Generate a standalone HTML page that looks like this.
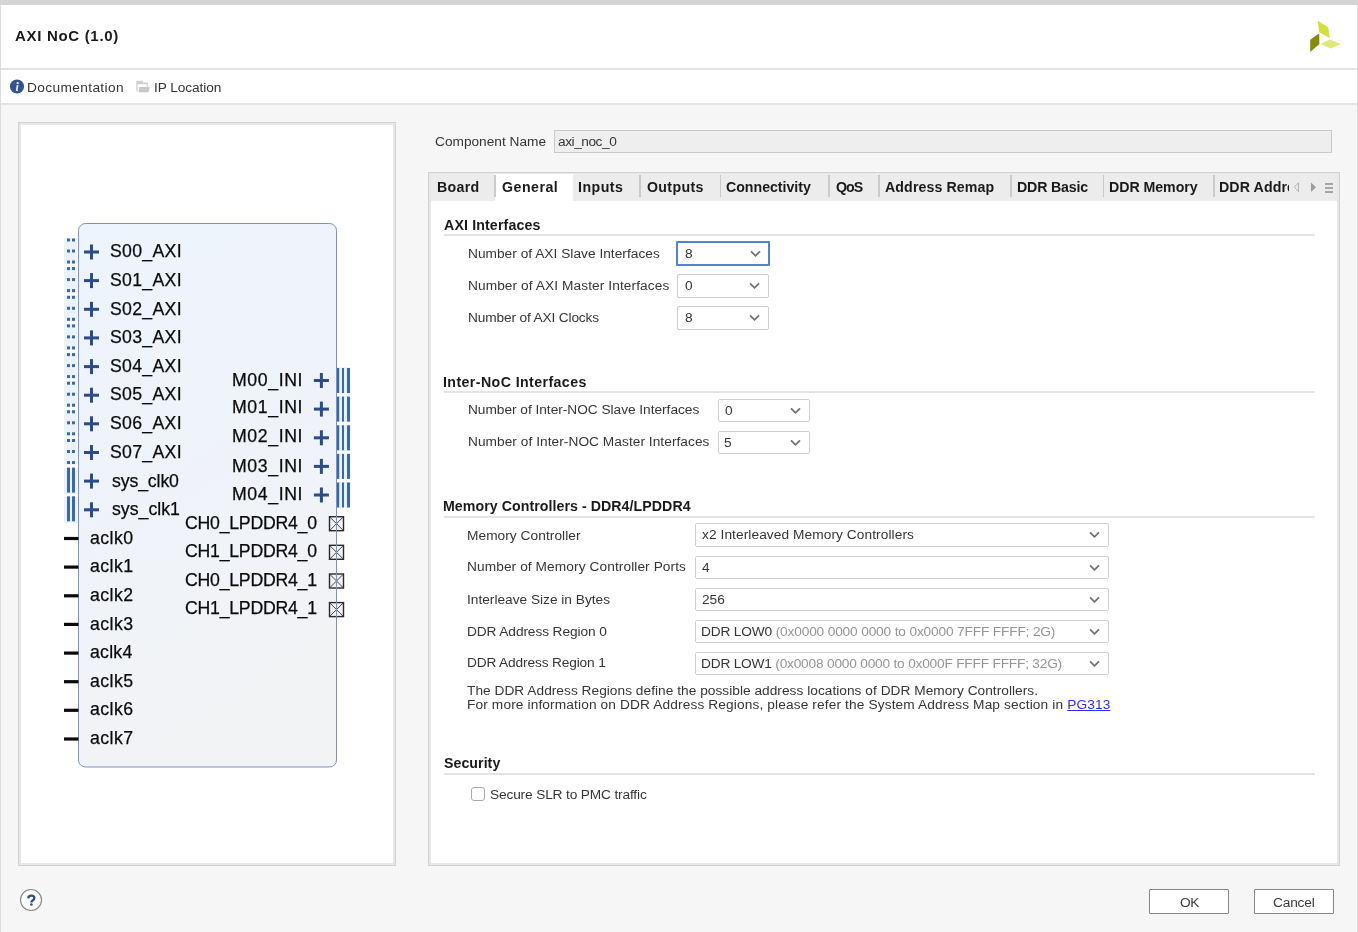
<!DOCTYPE html>
<html><head><meta charset="utf-8">
<style>
*{margin:0;padding:0;box-sizing:border-box}
html,body{width:1358px;height:932px;overflow:hidden;background:#f6f6f6;font-family:"Liberation Sans",sans-serif}
.a{position:absolute}
.t{position:absolute;white-space:nowrap;will-change:transform}
.clip{position:absolute;overflow:hidden}
.panel{position:absolute;background:#fff;border:1px solid #d2d2d2;box-shadow:inset 0 0 0 2px #e7e7e7}
.sect{position:absolute;height:2px;background:#e4e4e4;left:444px;width:871px}
.combo{position:absolute;background:#fff;border:1px solid #cfcfcf;border-radius:2px}
.tsep{position:absolute;top:175px;width:1.6px;height:22px;background:#cbcbcb}
.btn{position:absolute;top:889px;width:80px;height:25px;background:#fff;border:1px solid #858585;border-radius:1px}
</style></head><body>
<div class="ui">
<div class="a" style="left:0;top:0;width:1358px;height:5px;background:#d4d4d4"></div>
<div class="a" style="left:0;top:5px;width:1358px;height:63px;background:#fff"></div>
<div class="a" style="left:0;top:68px;width:1358px;height:2px;background:#e3e3e3"></div>
<div class="a" style="left:0;top:70px;width:1358px;height:33px;background:#fff"></div>
<div class="a" style="left:0;top:103px;width:1358px;height:2px;background:#e3e3e3"></div>
<div class="a" style="left:0;top:5px;width:1px;height:927px;background:#dcdcdc"></div>
<div class="a" style="left:1357px;top:5px;width:1px;height:927px;background:#dcdcdc"></div>
<svg class="a" style="left:1300px;top:15px" width="50" height="45" viewBox="1300 15 50 45">
<polygon points="1317.7,20.7 1328.2,27.2 1329.8,38.1 1319.2,32.3" fill="#d4e03a"/>
<polygon points="1319.2,33.2 1319.4,43.9 1310.2,52 1310.2,39.8" fill="#878a0c"/>
<polygon points="1320.3,44.1 1329.8,39.4 1340.9,43.9 1331,48.6" fill="#e0e87a"/>
</svg>
<svg class="a" style="left:9px;top:79px" width="16" height="16" viewBox="0 0 16 16">
<circle cx="8" cy="7.5" r="7.1" fill="#34548e"/>
<circle cx="8.7" cy="4.2" r="1.15" fill="#f4f6fa"/>
<path d="M7.7 6.2 L9.5 6.2 L8.5 10.6 Q8.4 11.1 9.1 10.9 L8.9 11.9 Q6.6 12.4 6.9 10.9 L7.6 7.3 L7.1 7.3 Z" fill="#f4f6fa"/>
</svg>
<svg class="a" style="left:130px;top:76px" width="30" height="22" viewBox="130 76 30 22">
<path d="M136.3 80.7 H142.5 L143.5 82.6 H147.8 V87.5 H137.6 V91.5 H136.3 Z" fill="#cfcfcf"/>
<path d="M137.6 84.2 H146.6 V87.2 H137.6 Z" fill="#fdfdfd"/>
<path d="M139.4 87.1 H149.8 L148.6 92.3 H138.4 Z" fill="#c9c9c9"/>
</svg>
<div class="panel" style="left:18px;top:122px;width:378px;height:744px"></div>
<svg class="a" style="left:18px;top:122px" width="378" height="744" viewBox="18 122 378 744">
<defs><linearGradient id="bg" x1="0" y1="0" x2="0.3" y2="1"><stop offset="0" stop-color="#edf4fd"/><stop offset="0.55" stop-color="#eff3f9"/><stop offset="1" stop-color="#f2f3f5"/></linearGradient></defs>
<rect x="78.5" y="223.5" width="258" height="543.5" rx="7" ry="7" fill="url(#bg)" stroke="#7b92c4" stroke-width="1"/>
<rect x="64" y="238.0" width="13" height="26" fill="#eaf2fc"/>
<rect x="67" y="238.5" width="3" height="3" fill="#3b6aa3"/><rect x="72" y="238.5" width="3" height="3" fill="#3b6aa3"/>
<rect x="67" y="249.5" width="3" height="3" fill="#3b6aa3"/><rect x="72" y="249.5" width="3" height="3" fill="#3b6aa3"/>
<rect x="67" y="260.5" width="3" height="3" fill="#3b6aa3"/><rect x="72" y="260.5" width="3" height="3" fill="#3b6aa3"/>
<rect x="84.0" y="250.5" width="15" height="3" fill="#2d4b86"/><rect x="90.0" y="244.5" width="3" height="15" fill="#2d4b86"/>
<rect x="64" y="266.6" width="13" height="26" fill="#eaf2fc"/>
<rect x="67" y="267.1" width="3" height="3" fill="#3b6aa3"/><rect x="72" y="267.1" width="3" height="3" fill="#3b6aa3"/>
<rect x="67" y="278.1" width="3" height="3" fill="#3b6aa3"/><rect x="72" y="278.1" width="3" height="3" fill="#3b6aa3"/>
<rect x="67" y="289.1" width="3" height="3" fill="#3b6aa3"/><rect x="72" y="289.1" width="3" height="3" fill="#3b6aa3"/>
<rect x="84.0" y="279.1" width="15" height="3" fill="#2d4b86"/><rect x="90.0" y="273.1" width="3" height="15" fill="#2d4b86"/>
<rect x="64" y="295.3" width="13" height="26" fill="#eaf2fc"/>
<rect x="67" y="295.8" width="3" height="3" fill="#3b6aa3"/><rect x="72" y="295.8" width="3" height="3" fill="#3b6aa3"/>
<rect x="67" y="306.8" width="3" height="3" fill="#3b6aa3"/><rect x="72" y="306.8" width="3" height="3" fill="#3b6aa3"/>
<rect x="67" y="317.8" width="3" height="3" fill="#3b6aa3"/><rect x="72" y="317.8" width="3" height="3" fill="#3b6aa3"/>
<rect x="84.0" y="307.8" width="15" height="3" fill="#2d4b86"/><rect x="90.0" y="301.8" width="3" height="15" fill="#2d4b86"/>
<rect x="64" y="323.9" width="13" height="26" fill="#eaf2fc"/>
<rect x="67" y="324.4" width="3" height="3" fill="#3b6aa3"/><rect x="72" y="324.4" width="3" height="3" fill="#3b6aa3"/>
<rect x="67" y="335.4" width="3" height="3" fill="#3b6aa3"/><rect x="72" y="335.4" width="3" height="3" fill="#3b6aa3"/>
<rect x="67" y="346.4" width="3" height="3" fill="#3b6aa3"/><rect x="72" y="346.4" width="3" height="3" fill="#3b6aa3"/>
<rect x="84.0" y="336.4" width="15" height="3" fill="#2d4b86"/><rect x="90.0" y="330.4" width="3" height="15" fill="#2d4b86"/>
<rect x="64" y="352.6" width="13" height="26" fill="#eaf2fc"/>
<rect x="67" y="353.1" width="3" height="3" fill="#3b6aa3"/><rect x="72" y="353.1" width="3" height="3" fill="#3b6aa3"/>
<rect x="67" y="364.1" width="3" height="3" fill="#3b6aa3"/><rect x="72" y="364.1" width="3" height="3" fill="#3b6aa3"/>
<rect x="67" y="375.1" width="3" height="3" fill="#3b6aa3"/><rect x="72" y="375.1" width="3" height="3" fill="#3b6aa3"/>
<rect x="84.0" y="365.1" width="15" height="3" fill="#2d4b86"/><rect x="90.0" y="359.1" width="3" height="15" fill="#2d4b86"/>
<rect x="64" y="381.2" width="13" height="26" fill="#eaf2fc"/>
<rect x="67" y="381.7" width="3" height="3" fill="#3b6aa3"/><rect x="72" y="381.7" width="3" height="3" fill="#3b6aa3"/>
<rect x="67" y="392.7" width="3" height="3" fill="#3b6aa3"/><rect x="72" y="392.7" width="3" height="3" fill="#3b6aa3"/>
<rect x="67" y="403.7" width="3" height="3" fill="#3b6aa3"/><rect x="72" y="403.7" width="3" height="3" fill="#3b6aa3"/>
<rect x="84.0" y="393.7" width="15" height="3" fill="#2d4b86"/><rect x="90.0" y="387.7" width="3" height="15" fill="#2d4b86"/>
<rect x="64" y="409.8" width="13" height="26" fill="#eaf2fc"/>
<rect x="67" y="410.3" width="3" height="3" fill="#3b6aa3"/><rect x="72" y="410.3" width="3" height="3" fill="#3b6aa3"/>
<rect x="67" y="421.3" width="3" height="3" fill="#3b6aa3"/><rect x="72" y="421.3" width="3" height="3" fill="#3b6aa3"/>
<rect x="67" y="432.3" width="3" height="3" fill="#3b6aa3"/><rect x="72" y="432.3" width="3" height="3" fill="#3b6aa3"/>
<rect x="84.0" y="422.3" width="15" height="3" fill="#2d4b86"/><rect x="90.0" y="416.3" width="3" height="15" fill="#2d4b86"/>
<rect x="64" y="438.5" width="13" height="26" fill="#eaf2fc"/>
<rect x="67" y="439.0" width="3" height="3" fill="#3b6aa3"/><rect x="72" y="439.0" width="3" height="3" fill="#3b6aa3"/>
<rect x="67" y="450.0" width="3" height="3" fill="#3b6aa3"/><rect x="72" y="450.0" width="3" height="3" fill="#3b6aa3"/>
<rect x="67" y="461.0" width="3" height="3" fill="#3b6aa3"/><rect x="72" y="461.0" width="3" height="3" fill="#3b6aa3"/>
<rect x="84.0" y="451.0" width="15" height="3" fill="#2d4b86"/><rect x="90.0" y="445.0" width="3" height="15" fill="#2d4b86"/>
<rect x="64" y="468.1" width="13.5" height="26" fill="#e9f1fb"/>
<rect x="67" y="467.6" width="3" height="25" fill="#3b6aa3"/><rect x="72" y="467.6" width="3" height="25" fill="#3b6aa3"/>
<rect x="84.0" y="479.6" width="15" height="3" fill="#2d4b86"/><rect x="90.0" y="473.6" width="3" height="15" fill="#2d4b86"/>
<rect x="64" y="496.8" width="13.5" height="26" fill="#e9f1fb"/>
<rect x="67" y="496.3" width="3" height="25" fill="#3b6aa3"/><rect x="72" y="496.3" width="3" height="25" fill="#3b6aa3"/>
<rect x="84.0" y="508.3" width="15" height="3" fill="#2d4b86"/><rect x="90.0" y="502.3" width="3" height="15" fill="#2d4b86"/>
<rect x="64" y="536.9" width="14.5" height="3.2" fill="#0a0a0a"/>
<rect x="64" y="565.5" width="14.5" height="3.2" fill="#0a0a0a"/>
<rect x="64" y="594.2" width="14.5" height="3.2" fill="#0a0a0a"/>
<rect x="64" y="622.8" width="14.5" height="3.2" fill="#0a0a0a"/>
<rect x="64" y="651.5" width="14.5" height="3.2" fill="#0a0a0a"/>
<rect x="64" y="680.1" width="14.5" height="3.2" fill="#0a0a0a"/>
<rect x="64" y="708.7" width="14.5" height="3.2" fill="#0a0a0a"/>
<rect x="64" y="737.4" width="14.5" height="3.2" fill="#0a0a0a"/>
<rect x="337" y="367.5" width="13.5" height="26" fill="#e9f1fb"/>
<rect x="337" y="368.0" width="2.2" height="25" fill="#3b6aa3"/>
<rect x="342" y="368.0" width="2" height="25" fill="#3b6aa3"/>
<rect x="347" y="368.0" width="3" height="25" fill="#3b6aa3"/>
<rect x="313.9" y="379.0" width="15" height="3" fill="#2d4b86"/><rect x="319.9" y="373.0" width="3" height="15" fill="#2d4b86"/>
<rect x="337" y="396.1" width="13.5" height="26" fill="#e9f1fb"/>
<rect x="337" y="396.6" width="2.2" height="25" fill="#3b6aa3"/>
<rect x="342" y="396.6" width="2" height="25" fill="#3b6aa3"/>
<rect x="347" y="396.6" width="3" height="25" fill="#3b6aa3"/>
<rect x="313.9" y="407.6" width="15" height="3" fill="#2d4b86"/><rect x="319.9" y="401.6" width="3" height="15" fill="#2d4b86"/>
<rect x="337" y="424.8" width="13.5" height="26" fill="#e9f1fb"/>
<rect x="337" y="425.3" width="2.2" height="25" fill="#3b6aa3"/>
<rect x="342" y="425.3" width="2" height="25" fill="#3b6aa3"/>
<rect x="347" y="425.3" width="3" height="25" fill="#3b6aa3"/>
<rect x="313.9" y="436.3" width="15" height="3" fill="#2d4b86"/><rect x="319.9" y="430.3" width="3" height="15" fill="#2d4b86"/>
<rect x="337" y="453.4" width="13.5" height="26" fill="#e9f1fb"/>
<rect x="337" y="453.9" width="2.2" height="25" fill="#3b6aa3"/>
<rect x="342" y="453.9" width="2" height="25" fill="#3b6aa3"/>
<rect x="347" y="453.9" width="3" height="25" fill="#3b6aa3"/>
<rect x="313.9" y="464.9" width="15" height="3" fill="#2d4b86"/><rect x="319.9" y="458.9" width="3" height="15" fill="#2d4b86"/>
<rect x="337" y="482.0" width="13.5" height="26" fill="#e9f1fb"/>
<rect x="337" y="482.5" width="2.2" height="25" fill="#3b6aa3"/>
<rect x="342" y="482.5" width="2" height="25" fill="#3b6aa3"/>
<rect x="347" y="482.5" width="3" height="25" fill="#3b6aa3"/>
<rect x="313.9" y="493.5" width="15" height="3" fill="#2d4b86"/><rect x="319.9" y="487.5" width="3" height="15" fill="#2d4b86"/>
<rect x="329.5" y="516.7" width="14" height="14" fill="#f0f3f8" stroke="#2a2a2a" stroke-width="1.4"/>
<path d="M329.5 516.7 L343.5 530.7 M343.5 516.7 L329.5 530.7" stroke="#333" stroke-width="0.9"/>
<line x1="336.5" y1="515.7" x2="336.5" y2="531.7" stroke="#7b92c4" stroke-width="1"/>
<rect x="329.5" y="545.3" width="14" height="14" fill="#f0f3f8" stroke="#2a2a2a" stroke-width="1.4"/>
<path d="M329.5 545.3 L343.5 559.3 M343.5 545.3 L329.5 559.3" stroke="#333" stroke-width="0.9"/>
<line x1="336.5" y1="544.3" x2="336.5" y2="560.3" stroke="#7b92c4" stroke-width="1"/>
<rect x="329.5" y="574.0" width="14" height="14" fill="#f0f3f8" stroke="#2a2a2a" stroke-width="1.4"/>
<path d="M329.5 574.0 L343.5 588.0 M343.5 574.0 L329.5 588.0" stroke="#333" stroke-width="0.9"/>
<line x1="336.5" y1="573.0" x2="336.5" y2="589.0" stroke="#7b92c4" stroke-width="1"/>
<rect x="329.5" y="602.6" width="14" height="14" fill="#f0f3f8" stroke="#2a2a2a" stroke-width="1.4"/>
<path d="M329.5 602.6 L343.5 616.6 M343.5 602.6 L329.5 616.6" stroke="#333" stroke-width="0.9"/>
<line x1="336.5" y1="601.6" x2="336.5" y2="617.6" stroke="#7b92c4" stroke-width="1"/>
</svg>
<div class="a" style="left:554px;top:130px;width:778px;height:23px;background:#eeeeee;border:1px solid #c9c9c9"></div>
<div class="panel" style="left:428px;top:172px;width:912px;height:694px"></div>
<div class="a" style="left:431px;top:174px;width:906px;height:27px;background:#ececec"></div>
<div class="a" style="left:495px;top:174px;width:78px;height:30px;background:#fff"></div>
<div class="tsep" style="left:494px"></div>
<div class="tsep" style="left:639px"></div>
<div class="tsep" style="left:719.5px"></div>
<div class="tsep" style="left:828px"></div>
<div class="tsep" style="left:878.4px"></div>
<div class="tsep" style="left:1010px"></div>
<div class="tsep" style="left:1102.6px"></div>
<div class="tsep" style="left:1213px"></div>
<svg class="a" style="left:1290px;top:180px" width="48" height="16" viewBox="1290 180 48 16">
<polygon points="1298.5,182.8 1298.5,191.6 1294.3,187.2" fill="none" stroke="#b4b4b4" stroke-width="1"/>
<polygon points="1311,182.4 1311,192 1316,187.2" fill="#9c9c9c"/>
<rect x="1325" y="183" width="8" height="2" fill="#a6a6a6"/>
<rect x="1325" y="187" width="8" height="2" fill="#a6a6a6"/>
<rect x="1325" y="191" width="8" height="2" fill="#a6a6a6"/>
</svg>
<div class="sect" style="top:234px"></div>
<div class="sect" style="top:390.5px"></div>
<div class="sect" style="top:515.5px"></div>
<div class="sect" style="top:773px"></div>
<div class="combo" style="left:676px;top:241px;width:94px;height:25px;border:2px solid #5384d4;border-radius:1px"></div>
<svg class="a" style="left:750.0px;top:249.7px" width="11" height="8" viewBox="0 0 11 8"><path d="M1 1.3 L5.5 5.8 L10 1.3" fill="none" stroke="#727272" stroke-width="1.8"/></svg>
<div class="combo" style="left:677px;top:273.5px;width:92px;height:24px"></div>
<svg class="a" style="left:749.0px;top:281.7px" width="11" height="8" viewBox="0 0 11 8"><path d="M1 1.3 L5.5 5.8 L10 1.3" fill="none" stroke="#727272" stroke-width="1.8"/></svg>
<div class="combo" style="left:677px;top:305.5px;width:92px;height:24px"></div>
<svg class="a" style="left:749.0px;top:313.7px" width="11" height="8" viewBox="0 0 11 8"><path d="M1 1.3 L5.5 5.8 L10 1.3" fill="none" stroke="#727272" stroke-width="1.8"/></svg>
<div class="combo" style="left:718px;top:399px;width:92px;height:23px"></div>
<svg class="a" style="left:790.0px;top:406.7px" width="11" height="8" viewBox="0 0 11 8"><path d="M1 1.3 L5.5 5.8 L10 1.3" fill="none" stroke="#727272" stroke-width="1.8"/></svg>
<div class="combo" style="left:718px;top:431px;width:92px;height:23px"></div>
<svg class="a" style="left:790.0px;top:438.7px" width="11" height="8" viewBox="0 0 11 8"><path d="M1 1.3 L5.5 5.8 L10 1.3" fill="none" stroke="#727272" stroke-width="1.8"/></svg>
<div class="combo" style="left:695px;top:523px;width:414px;height:23.5px"></div>
<svg class="a" style="left:1089.0px;top:531.0px" width="11" height="8" viewBox="0 0 11 8"><path d="M1 1.3 L5.5 5.8 L10 1.3" fill="none" stroke="#727272" stroke-width="1.8"/></svg>
<div class="combo" style="left:695px;top:555.5px;width:414px;height:23.5px"></div>
<svg class="a" style="left:1089.0px;top:563.5px" width="11" height="8" viewBox="0 0 11 8"><path d="M1 1.3 L5.5 5.8 L10 1.3" fill="none" stroke="#727272" stroke-width="1.8"/></svg>
<div class="combo" style="left:695px;top:587.5px;width:414px;height:23.5px"></div>
<svg class="a" style="left:1089.0px;top:595.5px" width="11" height="8" viewBox="0 0 11 8"><path d="M1 1.3 L5.5 5.8 L10 1.3" fill="none" stroke="#727272" stroke-width="1.8"/></svg>
<div class="combo" style="left:695px;top:619.5px;width:414px;height:23.5px"></div>
<svg class="a" style="left:1089.0px;top:627.5px" width="11" height="8" viewBox="0 0 11 8"><path d="M1 1.3 L5.5 5.8 L10 1.3" fill="none" stroke="#727272" stroke-width="1.8"/></svg>
<div class="combo" style="left:695px;top:651.5px;width:414px;height:23.5px"></div>
<svg class="a" style="left:1089.0px;top:659.5px" width="11" height="8" viewBox="0 0 11 8"><path d="M1 1.3 L5.5 5.8 L10 1.3" fill="none" stroke="#727272" stroke-width="1.8"/></svg>
<div class="a" style="left:471px;top:787px;width:14px;height:14px;border:1.3px solid #a9a9a9;border-radius:3px;background:#fff"></div>
<svg class="a" style="left:19px;top:888px" width="24" height="24" viewBox="0 0 24 24">
<circle cx="12" cy="12" r="10.5" fill="#fff" stroke="#8a8a8a" stroke-width="1.2"/>
<path d="M9.2 10.4 Q9.4 7.7 12.3 7.7 Q15.4 7.7 15.4 10.1 Q15.4 11.7 13.5 12.6 Q12.4 13.2 12.4 14.6" fill="none" stroke="#2f4c88" stroke-width="2.3"/><circle cx="12.4" cy="16.6" r="1.25" fill="#2f4c88"/>
</svg>
<div class="btn" style="left:1149px;width:80px"></div>
<div class="btn" style="left:1254px;width:80px"></div>
</div>
<div id="title" class="t" style="left:15.20px;top:27.80px;font-size:15.0px;line-height:15.0px;letter-spacing:0.688px;color:#1a1a1a;font-weight:bold">AXI NoC (1.0)</div>
<div id="doc" class="t" style="left:27.10px;top:80.80px;font-size:13.7px;line-height:13.7px;letter-spacing:0.375px;color:#353535">Documentation</div>
<div id="iploc" class="t" style="left:154.00px;top:80.80px;font-size:13.7px;line-height:13.7px;letter-spacing:-0.090px;color:#353535">IP Location</div>
<div id="compname" class="t" style="left:435.30px;top:134.80px;font-size:13.7px;line-height:13.7px;letter-spacing:0.000px;color:#353535">Component Name</div>
<div id="compval" class="t" style="left:557.50px;top:134.80px;font-size:13.7px;line-height:13.7px;letter-spacing:-0.454px;color:#353535">axi_noc_0</div>
<div id="tab0" class="t" style="left:436.60px;top:179.98px;font-size:14.2px;line-height:14.2px;letter-spacing:0.325px;color:#1a1a1a;font-weight:bold">Board</div>
<div id="tab1" class="t" style="left:501.50px;top:179.98px;font-size:14.2px;line-height:14.2px;letter-spacing:0.475px;color:#1a1a1a;font-weight:bold">General</div>
<div id="tab2" class="t" style="left:578.00px;top:179.98px;font-size:14.2px;line-height:14.2px;letter-spacing:0.460px;color:#1a1a1a;font-weight:bold">Inputs</div>
<div id="tab3" class="t" style="left:646.90px;top:179.98px;font-size:14.2px;line-height:14.2px;letter-spacing:0.325px;color:#1a1a1a;font-weight:bold">Outputs</div>
<div id="tab4" class="t" style="left:726.40px;top:179.98px;font-size:14.2px;line-height:14.2px;letter-spacing:-0.026px;color:#1a1a1a;font-weight:bold">Connectivity</div>
<div id="tab5" class="t" style="left:835.60px;top:179.98px;font-size:14.2px;line-height:14.2px;letter-spacing:-1.000px;color:#1a1a1a;font-weight:bold">QoS</div>
<div id="tab6" class="t" style="left:884.90px;top:179.98px;font-size:14.2px;line-height:14.2px;letter-spacing:0.100px;color:#1a1a1a;font-weight:bold">Address Remap</div>
<div id="tab7" class="t" style="left:1016.50px;top:179.98px;font-size:14.2px;line-height:14.2px;letter-spacing:-0.181px;color:#1a1a1a;font-weight:bold">DDR Basic</div>
<div id="tab8" class="t" style="left:1108.50px;top:179.98px;font-size:14.2px;line-height:14.2px;letter-spacing:-0.050px;color:#1a1a1a;font-weight:bold">DDR Memory</div>
<div class="clip" style="left:1220px;top:176.98px;width:69px;height:22.2px"><div id="tabclip" class="t" style="left:-1.00px;top:3px;font-size:14.2px;line-height:14.2px;letter-spacing:0.100px;color:#1a1a1a;font-weight:bold">DDR Address</div></div>
<div id="sec1" class="t" style="left:444.40px;top:217.88px;font-size:14.2px;line-height:14.2px;letter-spacing:0.135px;color:#1a1a1a;font-weight:bold">AXI Interfaces</div>
<div id="l1" class="t" style="left:467.90px;top:246.90px;font-size:13.7px;line-height:13.7px;letter-spacing:0.027px;color:#353535">Number of AXI Slave Interfaces</div>
<div id="l2" class="t" style="left:467.50px;top:278.70px;font-size:13.7px;line-height:13.7px;letter-spacing:0.090px;color:#353535">Number of AXI Master Interfaces</div>
<div id="l3" class="t" style="left:467.50px;top:310.70px;font-size:13.7px;line-height:13.7px;letter-spacing:-0.146px;color:#353535">Number of AXI Clocks</div>
<div id="v1" class="t" style="left:684.80px;top:246.70px;font-size:13.7px;line-height:13.7px;letter-spacing:0.000px;color:#353535">8</div>
<div id="v2" class="t" style="left:684.80px;top:278.70px;font-size:13.7px;line-height:13.7px;letter-spacing:0.000px;color:#353535">0</div>
<div id="v3" class="t" style="left:684.80px;top:310.70px;font-size:13.7px;line-height:13.7px;letter-spacing:0.000px;color:#353535">8</div>
<div id="sec2" class="t" style="left:443.10px;top:374.88px;font-size:14.2px;line-height:14.2px;letter-spacing:0.406px;color:#1a1a1a;font-weight:bold">Inter-NoC Interfaces</div>
<div id="l4" class="t" style="left:467.50px;top:403.30px;font-size:13.7px;line-height:13.7px;letter-spacing:-0.022px;color:#353535">Number of Inter-NOC Slave Interfaces</div>
<div id="l5" class="t" style="left:467.50px;top:435.30px;font-size:13.7px;line-height:13.7px;letter-spacing:0.050px;color:#353535">Number of Inter-NOC Master Interfaces</div>
<div id="v4" class="t" style="left:724.50px;top:403.50px;font-size:13.7px;line-height:13.7px;letter-spacing:0.000px;color:#353535">0</div>
<div id="v5" class="t" style="left:723.60px;top:435.50px;font-size:13.7px;line-height:13.7px;letter-spacing:0.000px;color:#353535">5</div>
<div id="sec3" class="t" style="left:443.40px;top:498.68px;font-size:14.2px;line-height:14.2px;letter-spacing:0.052px;color:#1a1a1a;font-weight:bold">Memory Controllers - DDR4/LPDDR4</div>
<div id="l6" class="t" style="left:467.40px;top:528.90px;font-size:13.7px;line-height:13.7px;letter-spacing:0.056px;color:#353535">Memory Controller</div>
<div id="l7" class="t" style="left:467.40px;top:559.60px;font-size:13.7px;line-height:13.7px;letter-spacing:0.092px;color:#353535">Number of Memory Controller Ports</div>
<div id="l8" class="t" style="left:467.40px;top:592.80px;font-size:13.7px;line-height:13.7px;letter-spacing:-0.002px;color:#353535">Interleave Size in Bytes</div>
<div id="l9" class="t" style="left:467.40px;top:624.70px;font-size:13.7px;line-height:13.7px;letter-spacing:-0.093px;color:#353535">DDR Address Region 0</div>
<div id="l10" class="t" style="left:467.40px;top:656.30px;font-size:13.7px;line-height:13.7px;letter-spacing:-0.144px;color:#353535">DDR Address Region 1</div>
<div id="v6" class="t" style="left:701.60px;top:528.40px;font-size:13.7px;line-height:13.7px;letter-spacing:0.084px;color:#353535">x2 Interleaved Memory Controllers</div>
<div id="v7" class="t" style="left:701.60px;top:560.70px;font-size:13.7px;line-height:13.7px;letter-spacing:0.000px;color:#353535">4</div>
<div id="v8" class="t" style="left:701.60px;top:592.70px;font-size:13.7px;line-height:13.7px;letter-spacing:0.000px;color:#353535">256</div>
<div id="v9" class="t" style="left:700.70px;top:624.70px;font-size:13.7px;line-height:13.7px;letter-spacing:-0.154px;color:#353535">DDR LOW0 <span style="color:#959595">(0x0000 0000 0000 to 0x0000 7FFF FFFF; 2G)</span></div>
<div id="v10" class="t" style="left:700.70px;top:656.70px;font-size:13.7px;line-height:13.7px;letter-spacing:-0.197px;color:#353535">DDR LOW1 <span style="color:#959595">(0x0008 0000 0000 to 0x000F FFFF FFFF; 32G)</span></div>
<div id="info1" class="t" style="left:466.90px;top:683.60px;font-size:13.7px;line-height:13.7px;letter-spacing:0.031px;color:#353535">The DDR Address Regions define the possible address locations of DDR Memory Controllers.</div>
<div id="info2" class="t" style="left:466.90px;top:698.20px;font-size:13.7px;line-height:13.7px;letter-spacing:0.131px;color:#353535">For more information on DDR Address Regions, please refer the System Address Map section in <span style="color:#2f2fe8;text-decoration:underline">PG313</span></div>
<div id="sec4" class="t" style="left:444.40px;top:755.98px;font-size:14.2px;line-height:14.2px;letter-spacing:0.040px;color:#1a1a1a;font-weight:bold">Security</div>
<div id="chk" class="t" style="left:489.60px;top:787.60px;font-size:13.7px;line-height:13.7px;letter-spacing:-0.146px;color:#353535">Secure SLR to PMC traffic</div>
<div id="ok" class="t" style="left:1180.00px;top:895.70px;font-size:13.7px;line-height:13.7px;letter-spacing:-0.300px;color:#3a3a3a">OK</div>
<div id="cancel" class="t" style="left:1273.30px;top:895.70px;font-size:13.7px;line-height:13.7px;letter-spacing:-0.180px;color:#3a3a3a">Cancel</div>
<div id="d_S00_AXI" class="t" style="left:110.40px;top:243.12px;font-size:17.7px;line-height:17.7px;letter-spacing:0.300px;color:#0a0a0a;-webkit-text-stroke:0.25px #0a0a0a">S00_AXI</div>
<div id="d_S01_AXI" class="t" style="left:110.40px;top:271.56px;font-size:17.7px;line-height:17.7px;letter-spacing:0.300px;color:#0a0a0a;-webkit-text-stroke:0.25px #0a0a0a">S01_AXI</div>
<div id="d_S02_AXI" class="t" style="left:110.40px;top:300.80px;font-size:17.7px;line-height:17.7px;letter-spacing:0.300px;color:#0a0a0a;-webkit-text-stroke:0.25px #0a0a0a">S02_AXI</div>
<div id="d_S03_AXI" class="t" style="left:110.40px;top:329.44px;font-size:17.7px;line-height:17.7px;letter-spacing:0.300px;color:#0a0a0a;-webkit-text-stroke:0.25px #0a0a0a">S03_AXI</div>
<div id="d_S04_AXI" class="t" style="left:110.40px;top:358.08px;font-size:17.7px;line-height:17.7px;letter-spacing:0.300px;color:#0a0a0a;-webkit-text-stroke:0.25px #0a0a0a">S04_AXI</div>
<div id="d_S05_AXI" class="t" style="left:110.40px;top:386.32px;font-size:17.7px;line-height:17.7px;letter-spacing:0.300px;color:#0a0a0a;-webkit-text-stroke:0.25px #0a0a0a">S05_AXI</div>
<div id="d_S06_AXI" class="t" style="left:110.40px;top:414.56px;font-size:17.7px;line-height:17.7px;letter-spacing:0.300px;color:#0a0a0a;-webkit-text-stroke:0.25px #0a0a0a">S06_AXI</div>
<div id="d_S07_AXI" class="t" style="left:110.40px;top:444.00px;font-size:17.7px;line-height:17.7px;letter-spacing:0.300px;color:#0a0a0a;-webkit-text-stroke:0.25px #0a0a0a">S07_AXI</div>
<div id="d_sys_clk0" class="t" style="left:111.60px;top:472.64px;font-size:17.7px;line-height:17.7px;letter-spacing:-0.127px;color:#0a0a0a;-webkit-text-stroke:0.25px #0a0a0a">sys_clk0</div>
<div id="d_sys_clk1" class="t" style="left:111.60px;top:501.08px;font-size:17.7px;line-height:17.7px;letter-spacing:0.002px;color:#0a0a0a;-webkit-text-stroke:0.25px #0a0a0a">sys_clk1</div>
<div id="d_aclk0" class="t" style="left:89.80px;top:529.72px;font-size:17.7px;line-height:17.7px;letter-spacing:0.460px;color:#0a0a0a;-webkit-text-stroke:0.25px #0a0a0a">aclk0</div>
<div id="d_aclk1" class="t" style="left:89.80px;top:557.56px;font-size:17.7px;line-height:17.7px;letter-spacing:0.460px;color:#0a0a0a;-webkit-text-stroke:0.25px #0a0a0a">aclk1</div>
<div id="d_aclk2" class="t" style="left:89.80px;top:587.20px;font-size:17.7px;line-height:17.7px;letter-spacing:0.460px;color:#0a0a0a;-webkit-text-stroke:0.25px #0a0a0a">aclk2</div>
<div id="d_aclk3" class="t" style="left:89.80px;top:615.84px;font-size:17.7px;line-height:17.7px;letter-spacing:0.460px;color:#0a0a0a;-webkit-text-stroke:0.25px #0a0a0a">aclk3</div>
<div id="d_aclk4" class="t" style="left:89.80px;top:644.28px;font-size:17.7px;line-height:17.7px;letter-spacing:0.235px;color:#0a0a0a;-webkit-text-stroke:0.25px #0a0a0a">aclk4</div>
<div id="d_aclk5" class="t" style="left:89.80px;top:672.72px;font-size:17.7px;line-height:17.7px;letter-spacing:0.460px;color:#0a0a0a;-webkit-text-stroke:0.25px #0a0a0a">aclk5</div>
<div id="d_aclk6" class="t" style="left:89.80px;top:701.16px;font-size:17.7px;line-height:17.7px;letter-spacing:0.460px;color:#0a0a0a;-webkit-text-stroke:0.25px #0a0a0a">aclk6</div>
<div id="d_aclk7" class="t" style="left:89.80px;top:730.40px;font-size:17.7px;line-height:17.7px;letter-spacing:0.460px;color:#0a0a0a;-webkit-text-stroke:0.25px #0a0a0a">aclk7</div>
<div id="d_M00_INI" class="t" style="left:232.30px;top:372.00px;font-size:17.7px;line-height:17.7px;letter-spacing:0.600px;color:#0a0a0a;-webkit-text-stroke:0.25px #0a0a0a">M00_INI</div>
<div id="d_M01_INI" class="t" style="left:232.30px;top:399.04px;font-size:17.7px;line-height:17.7px;letter-spacing:0.600px;color:#0a0a0a;-webkit-text-stroke:0.25px #0a0a0a">M01_INI</div>
<div id="d_M02_INI" class="t" style="left:232.30px;top:428.28px;font-size:17.7px;line-height:17.7px;letter-spacing:0.600px;color:#0a0a0a;-webkit-text-stroke:0.25px #0a0a0a">M02_INI</div>
<div id="d_M03_INI" class="t" style="left:232.30px;top:457.72px;font-size:17.7px;line-height:17.7px;letter-spacing:0.600px;color:#0a0a0a;-webkit-text-stroke:0.25px #0a0a0a">M03_INI</div>
<div id="d_M04_INI" class="t" style="left:232.30px;top:485.56px;font-size:17.7px;line-height:17.7px;letter-spacing:0.600px;color:#0a0a0a;-webkit-text-stroke:0.25px #0a0a0a">M04_INI</div>
<div id="d_CH0_LPDDR4_0" class="t" style="left:185.40px;top:515.20px;font-size:17.7px;line-height:17.7px;letter-spacing:-0.242px;color:#0a0a0a;-webkit-text-stroke:0.25px #0a0a0a">CH0_LPDDR4_0</div>
<div id="d_CH1_LPDDR4_0" class="t" style="left:185.40px;top:543.24px;font-size:17.7px;line-height:17.7px;letter-spacing:-0.242px;color:#0a0a0a;-webkit-text-stroke:0.25px #0a0a0a">CH1_LPDDR4_0</div>
<div id="d_CH0_LPDDR4_1" class="t" style="left:185.40px;top:572.28px;font-size:17.7px;line-height:17.7px;letter-spacing:-0.242px;color:#0a0a0a;-webkit-text-stroke:0.25px #0a0a0a">CH0_LPDDR4_1</div>
<div id="d_CH1_LPDDR4_1" class="t" style="left:185.40px;top:599.92px;font-size:17.7px;line-height:17.7px;letter-spacing:-0.242px;color:#0a0a0a;-webkit-text-stroke:0.25px #0a0a0a">CH1_LPDDR4_1</div>
</body></html>
